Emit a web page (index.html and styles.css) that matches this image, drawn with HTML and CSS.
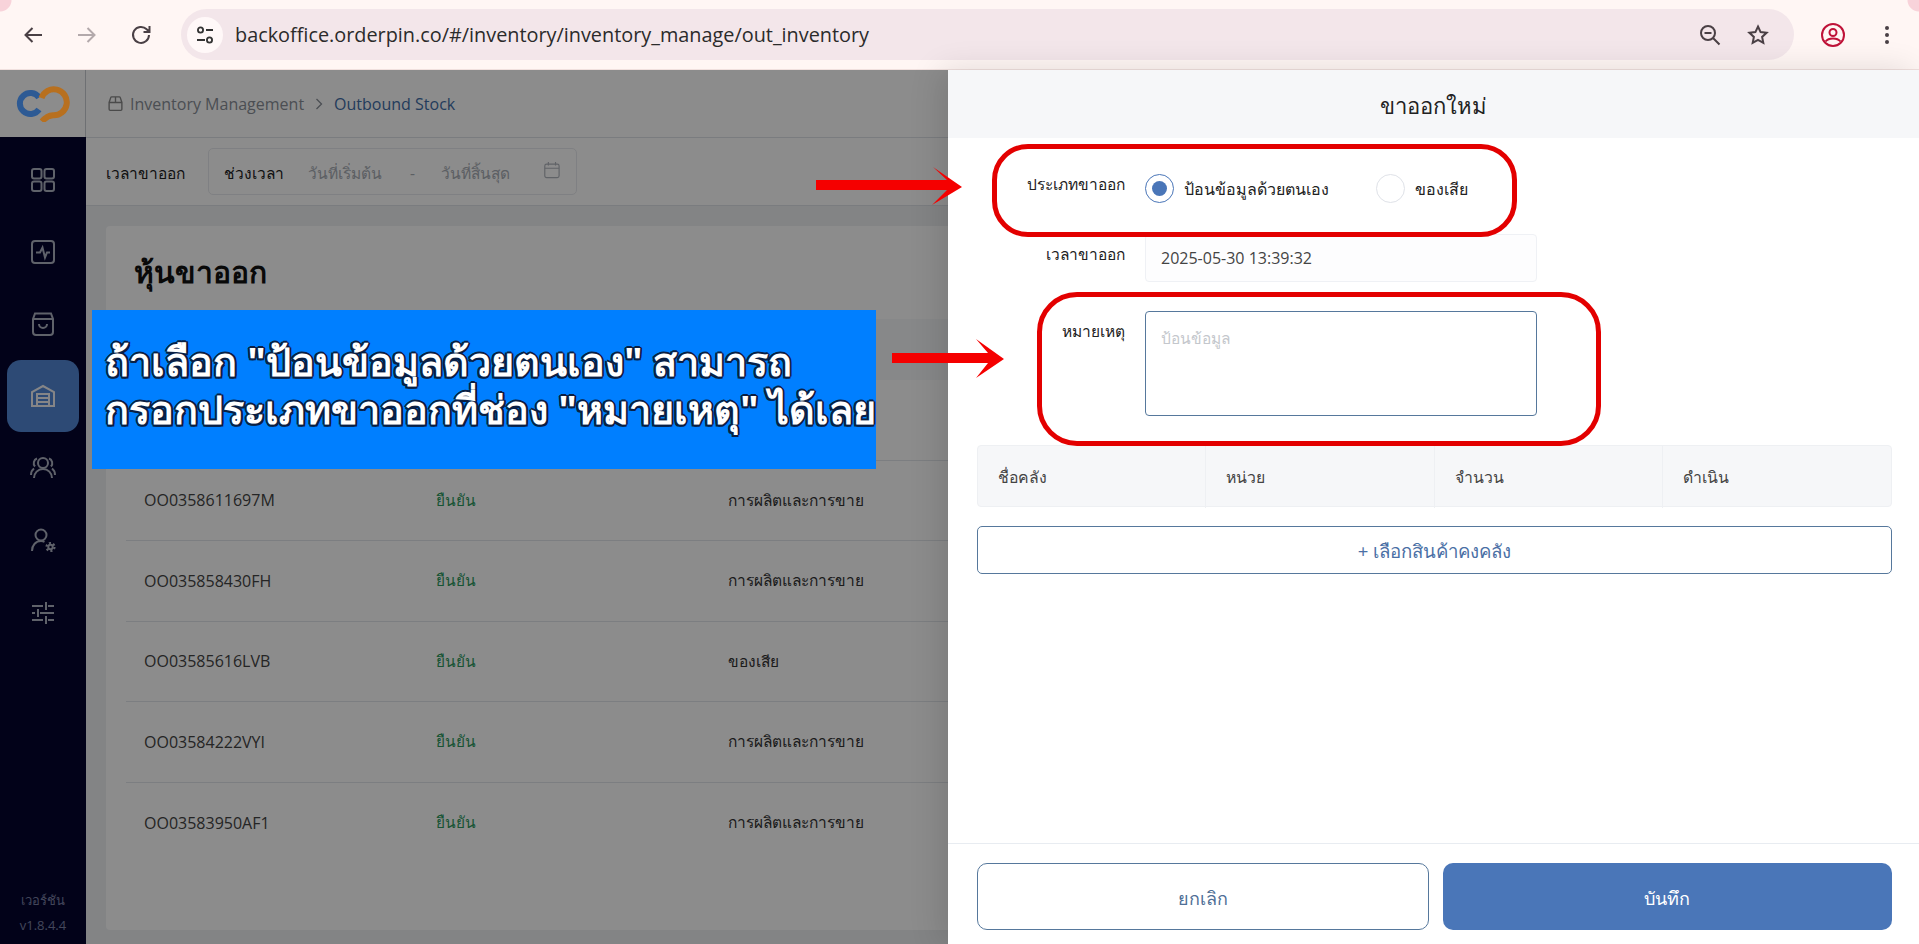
FILE: index.html
```html
<!DOCTYPE html>
<html lang="th">
<head>
<meta charset="utf-8">
<title>Outbound Stock</title>
<link rel="stylesheet" href="styles.css">
</head>
<body>
<header class="chrome">
  <button class="nav"><svg viewBox="0 0 24 24" class="ic"><path d="M21 12H5M11.500 5l-7 7 7 7" fill="none" stroke="#4a4045" stroke-width="2"/></svg></button>
  <button class="nav"><svg viewBox="0 0 24 24" class="ic"><path d="M3 12h16M12.500 5l7 7-7 7" fill="none" stroke="#b3a9ab" stroke-width="2"/></svg></button>
  <button class="nav nav-last"><svg viewBox="0 0 24 24" class="ic"><path d="M20 12a8 8 0 1 1-2.300-5.700L20 8.500M20.500 3v6h-6" fill="none" stroke="#4a4045" stroke-width="2"/></svg></button>
  <div class="omnibox">
    <span class="tune"><svg viewBox="0 0 20 20" class="tune-ic"><circle cx="5.500" cy="5" r="2.600" fill="none" stroke="#333" stroke-width="1.800"/><path d="M11 5h7M2 15h8" stroke="#333" stroke-width="1.800"/><circle cx="14.500" cy="15" r="2.600" fill="none" stroke="#333" stroke-width="1.800"/></svg></span>
    <span class="url">backoffice.orderpin.co/#/inventory/inventory_manage/out_inventory</span>
    <svg viewBox="0 0 24 24" class="ic omni-ic"><circle cx="10" cy="10" r="7" fill="none" stroke="#4a4045" stroke-width="2"/><path d="M6.500 10h7M15 15l6.500 6.500" stroke="#4a4045" stroke-width="2"/></svg>
    <svg viewBox="0 0 24 24" class="ic omni-ic"><path d="M12 3.500l2.600 5.600 6 .7-4.500 4.100 1.200 6-5.300-3-5.300 3 1.200-6L3.400 9.800l6-.7z" fill="none" stroke="#4a4045" stroke-width="2"/></svg>
  </div>
  <svg viewBox="0 0 24 24" class="ic profile"><circle cx="12" cy="12" r="11" fill="none" stroke="#bf1238" stroke-width="2"/><circle cx="12" cy="9.500" r="3.500" fill="none" stroke="#bf1238" stroke-width="2"/><path d="M4.500 18.500c2-2.500 4.500-3 7.500-3s5.500.5 7.500 3" fill="none" stroke="#bf1238" stroke-width="2"/></svg>
  <svg viewBox="0 0 24 24" class="ic dots"><circle cx="12" cy="5" r="2" fill="#4a4045"/><circle cx="12" cy="12" r="2" fill="#4a4045"/><circle cx="12" cy="19" r="2" fill="#4a4045"/></svg>
</header>
<div class="app">
  <div class="backdrop-area">
    <aside class="side">
      <div class="logo">
        <svg viewBox="0 0 54 36" class="logo-svg"><path d="M23 11.500A10.500 10.500 0 1 0 23 23.500" fill="none" stroke="#2d5a94" stroke-width="6"/><path d="M25.500 12A13 13 0 1 1 37 29.200Q31 29.500 26 35.500" fill="none" stroke="#b8701f" stroke-width="6"/></svg>
      </div>
      <nav class="side-nav">
        <a class="side-item"><svg viewBox="0 0 28 28" class="side-ic"><rect x="3" y="3" width="9.500" height="9.500" rx="2"/><rect x="15.500" y="3" width="9.500" height="9.500" rx="2"/><rect x="3" y="15.500" width="9.500" height="9.500" rx="2"/><rect x="15.500" y="15.500" width="9.500" height="9.500" rx="2"/></svg></a>
        <a class="side-item"><svg viewBox="0 0 28 28" class="side-ic"><rect x="3" y="3" width="22" height="22" rx="3"/><path d="M7 14.500h4l2.500-5 2.500 10 2-5h3"/></svg></a>
        <a class="side-item"><svg viewBox="0 0 28 28" class="side-ic"><path d="M4 9l2-5.500h16L24 9v13a3 3 0 0 1-3 3H7a3 3 0 0 1-3-3zM4 9h20M10 14a4 4 0 0 0 8 0"/></svg></a>
        <a class="side-item is-active"><svg viewBox="0 0 28 28" class="side-ic"><path d="M3 24V10l11-6 11 6v14zM8 24V12h12v12M8 16h12M8 20h12"/></svg></a>
        <a class="side-item"><svg viewBox="0 0 28 28" class="side-ic"><circle cx="14" cy="9" r="5"/><path d="M5 24c0-5 4-9 9-9s9 4 9 9M8 4.500a5 5 0 0 0-2 8M20 4.500a5 5 0 0 1 2 8M2 21c0-3 1-5 3-6.500M26 21c0-3-1-5-3-6.500"/></svg></a>
        <a class="side-item"><svg viewBox="0 0 28 28" class="side-ic"><circle cx="12" cy="9" r="5.500"/><path d="M3 25c0-6 4-10 9-10 1.500 0 2.500.3 3.500.8"/><circle cx="21.500" cy="21" r="2.200"/><circle cx="21.500" cy="21" r="4" stroke-width="2.200" stroke-dasharray="2.100 2.090"/></svg></a>
        <a class="side-item"><svg viewBox="0 0 28 28" class="side-ic"><path d="M3 8h11M19 8h6M17 4v8M3 15h3M11 15h14M9 11v8M3 22h11M19 22h6M17 18v8"/></svg></a>
      </nav>
      <div class="version"><span>เวอร์ชัน</span><span>v1.8.4.4</span></div>
    </aside>
    <main class="page">
      <div class="crumbs">
        <svg viewBox="0 0 16 16" class="crumb-ic"><path d="M2 7h12v6.500a1 1 0 0 1-1 1H3a1 1 0 0 1-1-1zM2 7l1.500-4.500a1 1 0 0 1 1-.7h7a1 1 0 0 1 1 .7L14 7M8 2v5"/></svg>
        <span class="crumb-muted">Inventory Management</span>
        <svg viewBox="0 0 10 16" class="crumb-sep"><path d="M2.500 3l5 5-5 5"/></svg>
        <span class="crumb-current">Outbound Stock</span>
      </div>
      <div class="filter">
        <span class="filter-label">เวลาขาออก</span>
        <div class="date-box">
          <span class="date-kind">ช่วงเวลา</span>
          <span class="date-ph date-start">วันที่เริ่มต้น</span>
          <span class="date-ph date-dash">-</span>
          <span class="date-ph date-end">วันที่สิ้นสุด</span>
          <svg viewBox="0 0 20 20" class="date-ic"><rect x="2" y="3.500" width="16" height="15" rx="2"/><path d="M2 8h16M6 1v4M14 1v4"/></svg>
        </div>
      </div>
      <section class="card">
        <h1 class="card-title">หุ้นขาออก</h1>
        <div class="thead"></div>
        <div class="row row-hidden"></div>
        <div class="row"><span class="c-id">OO0358611697M</span><span class="c-st">ยืนยัน</span><span class="c-ty">การผลิตและการขาย</span></div>
        <div class="row"><span class="c-id">OO035858430FH</span><span class="c-st">ยืนยัน</span><span class="c-ty">การผลิตและการขาย</span></div>
        <div class="row"><span class="c-id">OO03585616LVB</span><span class="c-st">ยืนยัน</span><span class="c-ty">ของเสีย</span></div>
        <div class="row"><span class="c-id">OO03584222VYI</span><span class="c-st">ยืนยัน</span><span class="c-ty">การผลิตและการขาย</span></div>
        <div class="row row-last"><span class="c-id">OO03583950AF1</span><span class="c-st">ยืนยัน</span><span class="c-ty">การผลิตและการขาย</span></div>
      </section>
    </main>
    <div class="scrim"></div>
  </div>
  <aside class="drawer">
    <div class="drawer-head">ขาออกใหม่</div>
    <div class="drawer-body">
      <div class="field field-radio">
        <span class="label">ประเภทขาออก</span>
        <div class="radios">
          <span class="radio radio-on"><i></i></span><span class="radio-text radio-text-a">ป้อนข้อมูลด้วยตนเอง</span>
          <span class="radio"></span><span class="radio-text">ของเสีย</span>
        </div>
      </div>
      <div class="field field-time">
        <span class="label">เวลาขาออก</span>
        <div class="input">2025-05-30 13:39:32</div>
      </div>
      <div class="field field-note">
        <span class="label">หมายเหตุ</span>
        <div class="textarea">ป้อนข้อมูล</div>
      </div>
      <div class="grid-head"><span>ชื่อคลัง</span><span>หน่วย</span><span>จำนวน</span><span>ดำเนิน</span></div>
      <button class="add">+ เลือกสินค้าคงคลัง</button>
    </div>
    <div class="drawer-foot">
      <button class="btn btn-ghost">ยกเลิก</button>
      <button class="btn btn-solid">บันทึก</button>
    </div>
  </aside>
</div>
<div class="banner">ถ้าเลือก "ป้อนข้อมูลด้วยตนเอง" สามารถ<br>กรอกประเภทขาออกที่ช่อง "หมายเหตุ" ได้เลย</div>
<div class="ring ring-a"></div>
<div class="ring ring-b"></div>
<svg class="arrow arrow-a" viewBox="0 0 146 38"><path d="M0 13H131L117 0l29 20-30 18 15-15H0z" fill="#f50000"/></svg>
<svg class="arrow arrow-b" viewBox="0 0 112 39"><path d="M0 14H96L84 0l28 20-28 19 12-15H0z" fill="#f50000"/></svg>
</body>
</html>
```
FILE: styles.css
```css
* { box-sizing: border-box; }
html, body { margin: 0; height: 944px; overflow: hidden; }
body { font-family: "Open Sans", "Noto Sans", "Liberation Sans", sans-serif; font-size: 15.500px; color: #222; background: #fff; }
button { font: inherit; border: 0; background: none; padding: 0; }
.chrome { height: 70px; background: radial-gradient(circle at 0 0, #f8d3da 0 11px, transparent 12px), radial-gradient(circle at 100% 0, #f8d3da 0 11px, transparent 12px), #fff6f4; border-bottom: 1px solid #f0e0de; display: flex; align-items: center; padding: 0 0 0 21px; }
.nav { width: 24px; height: 24px; margin-right: 30px; display: flex; }
.nav-last { margin-right: 28px; }
.ic { width: 24px; height: 24px; display: block; flex: none; }
.omnibox { width: 1613px; height: 51px; background: #f3e6ea; border-radius: 26px; display: flex; align-items: center; padding: 0 24px 0 6px; flex: none; }
.tune { width: 36px; height: 36px; border-radius: 50%; background: #fff8f8; display: flex; align-items: center; justify-content: center; margin-right: 12px; }
.tune-ic { width: 20px; height: 20px; }
.url { flex: 1; font-size: 19.850px; color: #2b2b2b; }
.omni-ic { margin-left: 24px; }
.profile { margin-left: 27px; }
.dots { margin-left: 30px; }
.app { height: 874px; display: flex; }
.backdrop-area { width: 948px; position: relative; display: flex; background: #eef0f3; overflow: hidden; }
.side { width: 86px; background: #05052e; display: flex; flex-direction: column; flex: none; }
.logo { height: 67px; background: #fff; display: flex; align-items: center; padding-left: 16px; border-right: 1px solid #c9ccd2; }
.logo-svg { width: 54px; height: 36px; position: relative; z-index: 2; }
.side-nav { display: flex; flex-direction: column; align-items: center; padding-top: 7px; flex: 1; }
.side-item { width: 72px; height: 72px; flex: none; display: flex; align-items: center; justify-content: center; border-radius: 14px; }
.is-active { background: #5288d6; }
.side-ic { width: 28px; height: 28px; fill: none; stroke: #aeb2c2; stroke-width: 2; }
.is-active .side-ic { stroke: #f2f3f6; }
.version { display: flex; flex-direction: column; align-items: center; gap: 5px; font-size: 13px; color: #7a80a5; padding-bottom: 10px; }
.page { flex: 1; min-width: 0; }
.crumbs { height: 68px; background: #fff; border-bottom: 1px solid #dfe2e8; display: flex; align-items: center; padding-left: 21px; font-size: 16px; }
.crumb-ic { width: 17px; height: 17px; fill: none; stroke: #888; stroke-width: 1.300; margin-right: 6px; }
.crumb-muted { color: #8a8f98; }
.crumb-sep { width: 10px; height: 16px; fill: none; stroke: #8a8f98; stroke-width: 1.300; margin: 0 10px; }
.crumb-current { color: #3f6ea8; }
.filter { height: 68px; background: #fff; border-bottom: 1px solid #dfe2e8; display: flex; align-items: center; padding-left: 20px; padding-top: 3px; }
.filter-label { width: 102px; }
.date-box { width: 369px; height: 47px; border: 1px solid #e8eaee; border-radius: 5px; display: flex; align-items: center; padding: 0 15px; margin-top: -3px; }
.date-kind { width: 84px; padding-top: 3px; }
.date-ph { color: #a8adb5; padding-top: 3px; }
.date-start { width: 103px; }
.date-dash { width: 31px; }
.date-end { width: 102px; }
.date-ic { width: 18px; height: 18px; fill: none; stroke: #b0b4bc; stroke-width: 1.300; margin-left: 1px; margin-top: -4px; }
.card { margin: 20px 0 0 20px; height: 704px; background: #fff; border-radius: 4px 0 0 4px; }
.card-title { margin: 0; height: 93px; padding: 23px 0 0 28px; font-size: 30px; font-weight: 700; color: #111; }
.thead { height: 61px; background: #f6f7f9; }
.row { height: 80.500px; margin-left: 20px; border-bottom: 1px solid #e2e6ec; display: flex; align-items: center; padding-left: 18px; }
.row-last { border-bottom: 0; }
.c-id { width: 292px; color: #444; font-size: 16px; }
.c-st { width: 292px; color: #2d9a5f; }
.c-ty { color: #333; }
.scrim { position: absolute; inset: 0; background: rgba(0, 0, 0, .45); }
.drawer { width: 971px; display: flex; flex-direction: column; background: #fff; position: relative; box-shadow: -8px 0 30px rgba(0, 0, 0, .12); }
.drawer-head { height: 68px; background: #f6f7f9; text-align: center; line-height: 71px; font-size: 22px; color: #222; }
.drawer-body { flex: 1; padding: 0 27px 0 29px; }
.field { display: grid; grid-template-columns: 148px 392px; column-gap: 20px; }
.label { text-align: right; color: #222; }
.field-radio { height: 96px; padding-top: 36px; }
.field-radio .label { margin-top: -2px; }
.radios { display: flex; align-items: center; height: 29px; }
.radio { width: 29px; height: 29px; border: 1px solid #dfe2e8; border-radius: 50%; display: flex; align-items: center; justify-content: center; flex: none; }
.radio-on { border-color: #4a76b8; }
.radio-on i { width: 15px; height: 15px; background: #4a76b8; border-radius: 50%; }
.radio-text { margin-left: 10px; font-size: 16px; color: #222; padding-top: 2px; }
.radio-text-a { width: 192px; flex: none; }
.field-time { height: 77px; }
.field-time .label { padding-top: 8px; }
.input { height: 48px; border: 1px solid #eff1f5; border-radius: 4px; background: #fdfdfe; padding: 0 15px; line-height: 47px; font-size: 16px; color: #444; }
.field-note { height: 134px; }
.field-note .label { padding-top: 8px; }
.textarea { height: 105px; border: 1px solid #56789c; border-radius: 4px; padding: 14px 15px; font-size: 15.500px; color: #c4c7cc; }
.grid-head { height: 62px; background: #f6f7f9; border: 1px solid #eef0f3; border-radius: 4px; display: grid; grid-template-columns: repeat(4, 1fr); align-items: stretch; }
.grid-head span { border-right: 1px solid #eef0f3; padding: 0 0 0 20px; line-height: 62px; font-size: 15.800px; color: #444; }
.grid-head span:last-child { border-right: 0; }
.add { display: block; width: 100%; height: 48px; margin-top: 19px; border: 1px solid #56789c; border-radius: 5px; color: #4a6fa5; font-size: 18.600px; background: #fff; padding-top: 2px; }
.drawer-foot { height: 101px; border-top: 1px solid #e8ecf1; display: flex; gap: 14px; padding: 19px 27px 0 29px; }
.btn { flex: 1; height: 67px; border-radius: 10px; font-size: 18px; font-weight: 500; padding-top: 4px; }
.btn-ghost { border: 1px solid #56789c; color: #4f6f96; background: #fff; }
.btn-solid { background: #4a76b8; color: #fff; }
.banner { position: absolute; left: 92px; top: 310px; width: 784px; height: 159px; background: #007fff; color: #fff; padding: 27px 0 0 13px; font-size: 39.500px; line-height: 48px; font-weight: 700; white-space: nowrap; text-shadow: 2px 0 #0a1f44, -2px 0 #0a1f44, 0 2px #0a1f44, 0 -2px #0a1f44, 1.500px 1.500px #0a1f44, -1.500px -1.500px #0a1f44, 1.500px -1.500px #0a1f44, -1.500px 1.500px #0a1f44; }
.ring { position: absolute; border: 5px solid #e30000; background: transparent; }
.ring-a { left: 992px; top: 144px; width: 525px; height: 93px; border-radius: 36px; }
.ring-b { left: 1037px; top: 292px; width: 564px; height: 154px; border-radius: 40px; }
.arrow { position: absolute; }
.arrow-a { left: 816px; top: 167px; width: 146px; height: 38px; }
.arrow-b { left: 892px; top: 339px; width: 112px; height: 39px; }
```
